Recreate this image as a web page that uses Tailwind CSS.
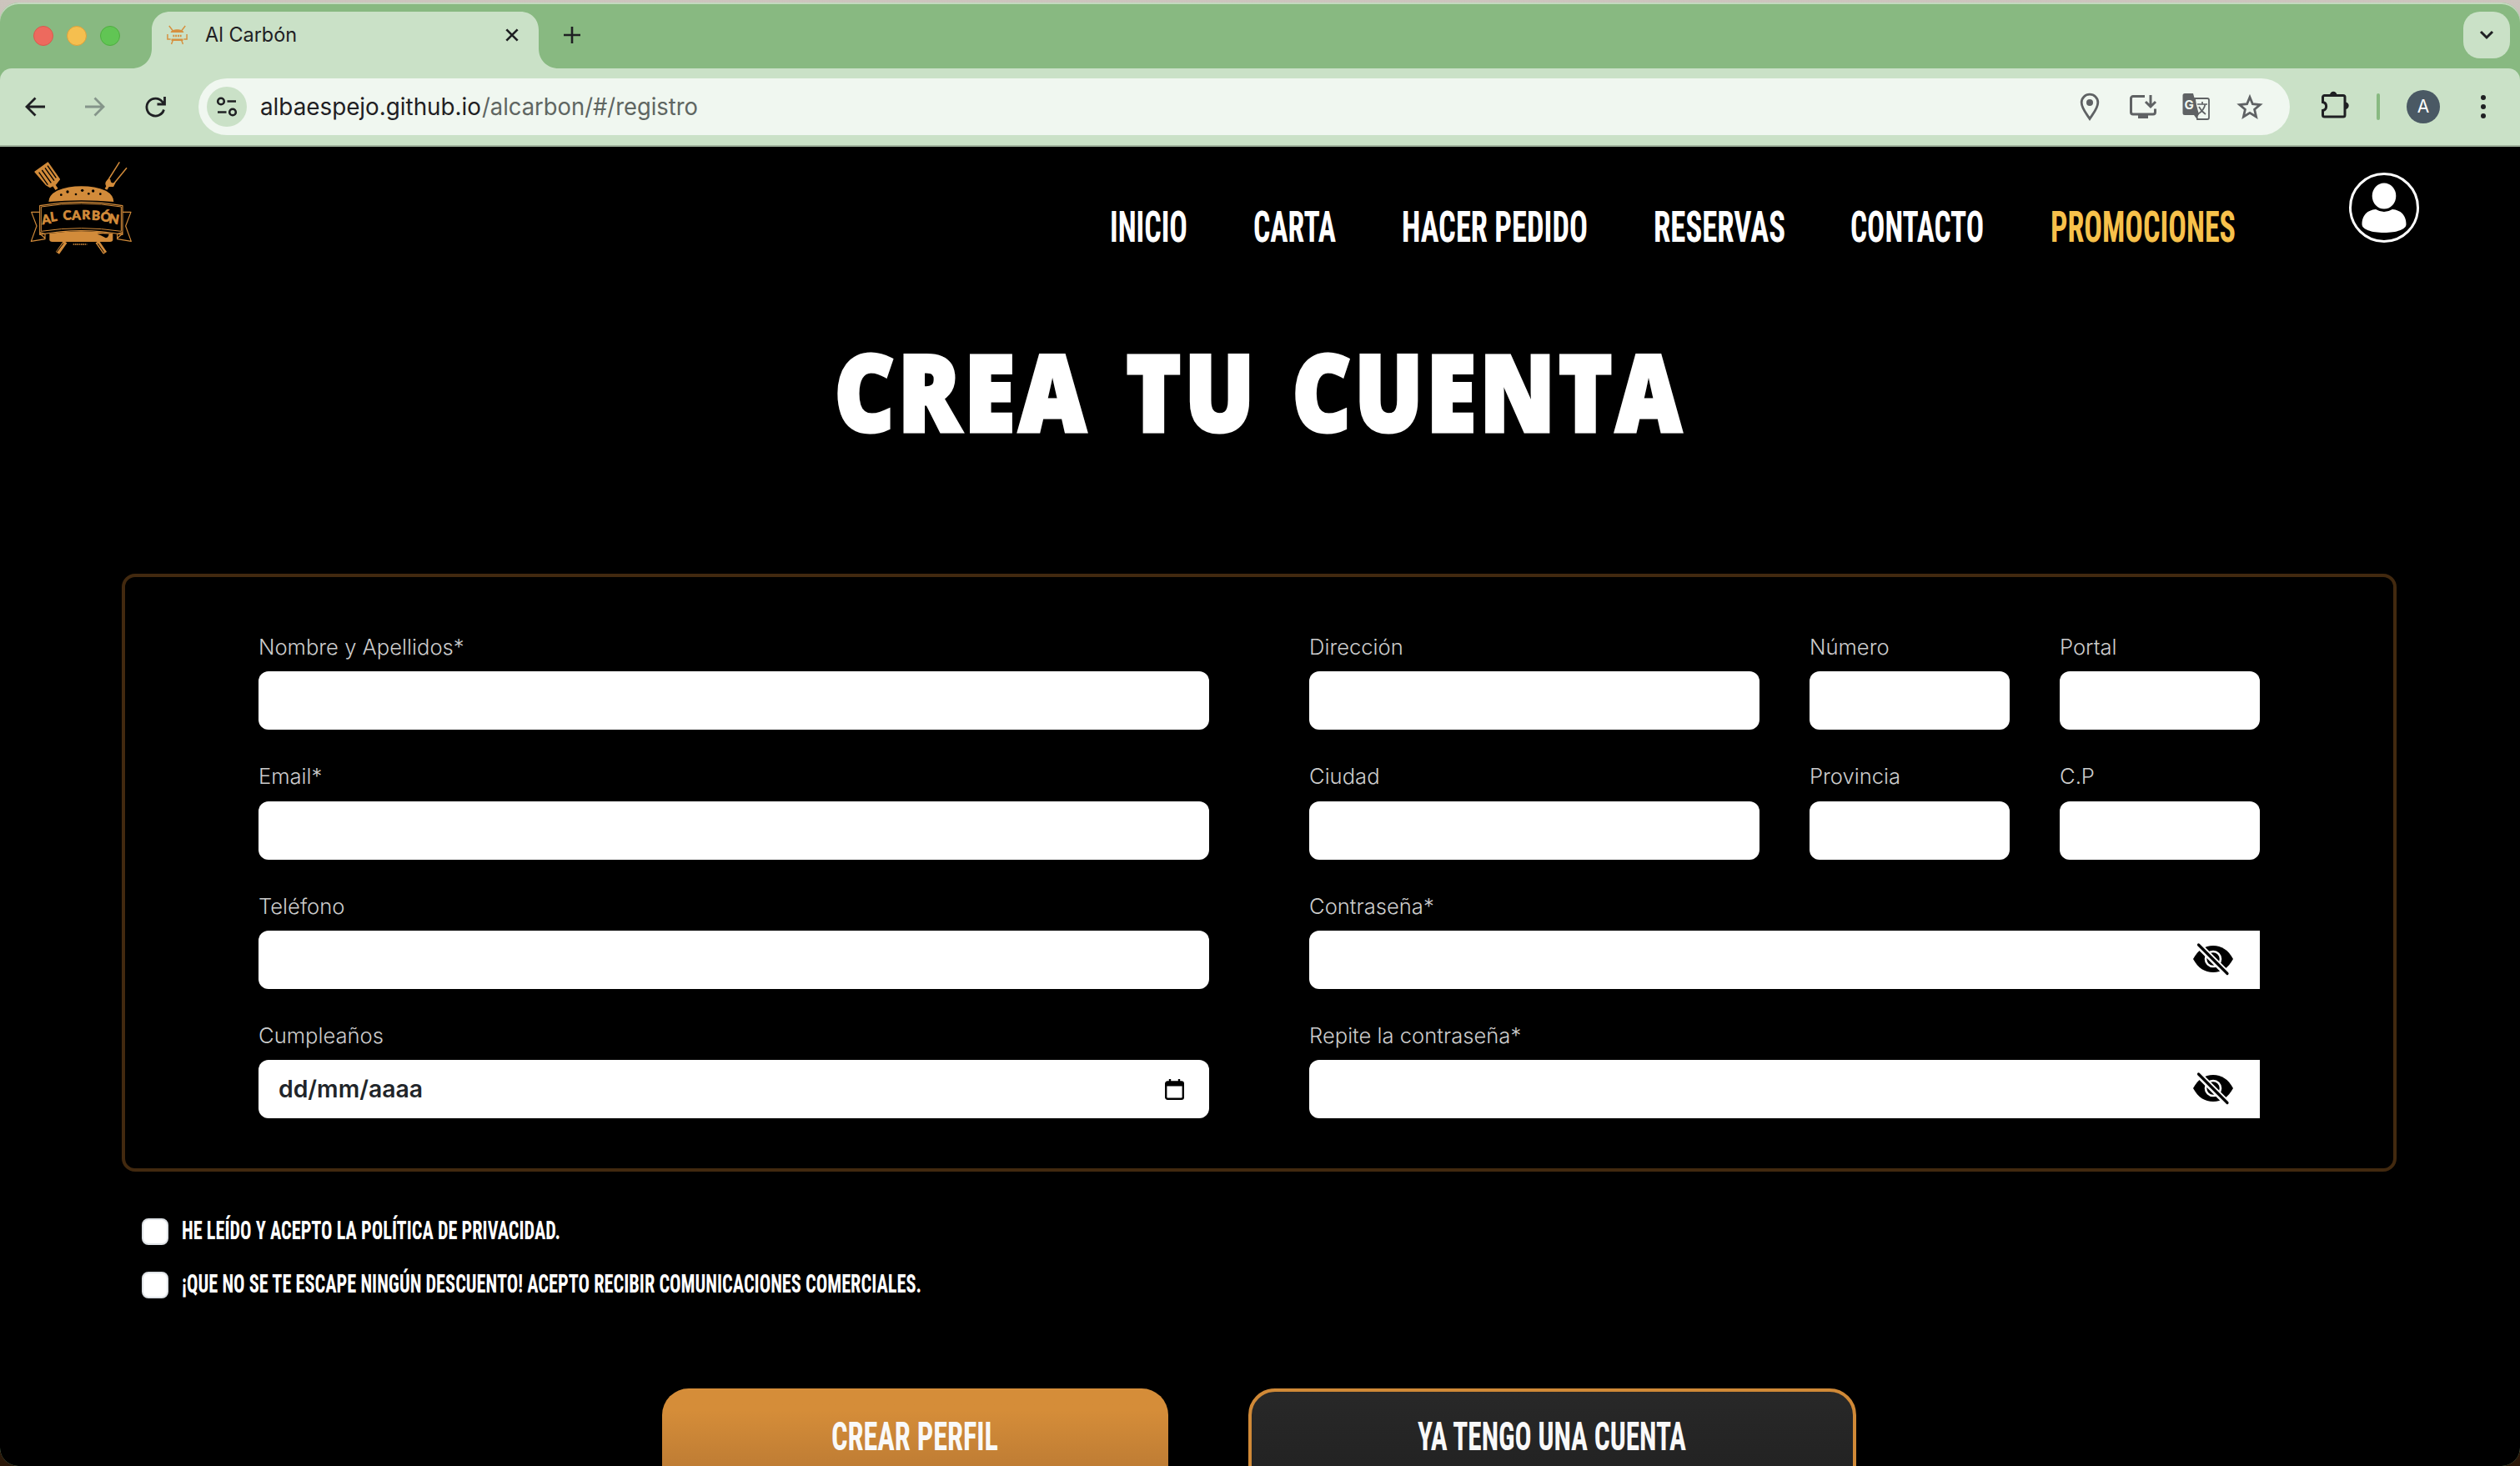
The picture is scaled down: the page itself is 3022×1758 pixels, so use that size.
<!DOCTYPE html>
<html lang="es">
<head>
<meta charset="utf-8">
<title>Al Carbón</title>
<script src="https://cdn.jsdelivr.net/npm/@tailwindcss/browser@4"></script>
</head>
<body class="h-[1758px] w-[3022px] overflow-hidden bg-linear-to-b from-[#cdc5be] to-[#2a1708] pt-[3px] font-['Inter',sans-serif] [&_svg]:overflow-visible">
<div class="flex h-[1755px] flex-col overflow-hidden rounded-[22px] bg-[#88b981] shadow-[inset_0_2px_0_#c3d9bf]">

  <!-- Tab strip -->
  <div class="flex h-[79px] shrink-0 items-start pt-[11px]">
    <div class="ml-10 mt-[17px] flex gap-4">
      <span class="size-6 rounded-full border border-[#d9594d] bg-[#ed6a5e]"></span>
      <span class="size-6 rounded-full border border-[#dba13c] bg-[#f5bf4f]"></span>
      <span class="size-6 rounded-full border border-[#4fae40] bg-[#61c554]"></span>
    </div>
    <div class="relative ml-[38px] flex h-[68px] w-[464px] items-start">
      <svg class="absolute -left-6 top-0" width="512" height="68" viewBox="0 0 512 68" fill="#cae1c7"><path d="M0 68c14 0 24-10 24-24V22C24 9 33 0 46 0h420c13 0 22 9 22 22v22c0 14 10 24 24 24z"/></svg>
      <svg class="relative ml-[18px] mt-4" width="25" height="24" viewBox="0 0 27 24" fill="none" stroke="#d6903f" stroke-width="1.600" preserveAspectRatio="none"><path d="M3 1l5 6M24 1l-5 6M8 18l-2 5M19 18l2 5M1 11v6h4M26 11v6h-4" /><path d="M5 9c1-5 16-5 17 0zM6 16.500h15v2.500h-15z" fill="#d6903f" stroke="none"/><path d="M8 13h11" stroke-width="2.400" stroke-dasharray="2 1"/></svg>
      <svg class="relative ml-[21px] mt-3" width="112" height="34" fill="#1f2023"><text x="0" y="24" font-size="24" textLength="110" lengthAdjust="spacingAndGlyphs">Al Carbón</text></svg>
      <svg class="relative ml-[248px] mt-5" width="16" height="16" viewBox="0 0 18 18" stroke="#1f2023" stroke-width="3"><path d="M1.500 1.500l15 15M16.500 1.500l-15 15"/></svg>
    </div>
    <svg class="ml-[30px] mt-[18px]" width="20" height="20" viewBox="0 0 20 20" stroke="#1f2023" stroke-width="2.600"><path d="M10 0v20M0 10h20"/></svg>
    <div class="ml-auto mr-3 flex size-14 items-center justify-center rounded-[20px] bg-[#cae1c7]">
      <svg width="18" height="12" viewBox="0 0 18 12" fill="none" stroke="#1f2023" stroke-width="3"><path d="M2 2l7 7 7-7"/></svg>
    </div>
  </div>

  <!-- Toolbar -->
  <div class="flex h-[94px] shrink-0 items-center rounded-t-[14px] border-b-2 border-[#9fb29c] bg-[#cae1c7]">
    <svg class="ml-[30px]" width="24" height="24" viewBox="0 0 24 24" fill="none" stroke="#1f2023" stroke-width="2.800"><path d="M24 12H2M12.500 1.500L2 12l10.500 10.500"/></svg>
    <svg class="ml-12" width="24" height="24" viewBox="0 0 24 24" fill="none" stroke="#85958a" stroke-width="2.800"><path d="M0 12h22M11.500 1.500L22 12 11.500 22.500"/></svg>
    <svg class="ml-12" width="25" height="25" viewBox="0 0 25 25" fill="none" stroke="#1f2023" stroke-width="2.800"><path d="M22.500 15.500A10.500 10.500 0 1 1 20.800 6.200L23 8.500M23.500 0v9h-9"/></svg>
    <div class="ml-[39px] flex h-[68px] w-[2508px] items-center rounded-full bg-[#f0f7f0]">
      <div class="ml-[10px] flex size-12 items-center justify-center rounded-full bg-[#cae1c7]">
        <svg width="26" height="24" viewBox="0 0 26 24" fill="none" stroke="#1f2023" stroke-width="2.600"><circle cx="6" cy="5.500" r="3.800"/><path d="M13.500 5.500H24M2 18.500h10.500"/><circle cx="20" cy="18.500" r="3.800"/></svg>
      </div>
      <svg class="ml-4" width="540" height="48"><text y="34" font-size="28" fill="#1f2023" textLength="265" lengthAdjust="spacingAndGlyphs">albaespejo.github.io</text><text x="266" y="34" font-size="28" fill="#5f6662" textLength="259" lengthAdjust="spacingAndGlyphs">/alcarbon/#/registro</text></svg>
      <div class="ml-auto mr-8 flex items-center">
        <svg class="mr-[34px]" width="28" height="34" viewBox="0 0 28 34" fill="none" stroke="#5f6264" stroke-width="2.800"><path d="M14 31.500C9 24 4.200 18.500 4.200 12a9.800 9.800 0 0 1 19.600 0c0 6.500-4.800 12-9.800 19.500z"/><circle cx="14" cy="12" r="4" fill="#5f6264" stroke="none"/></svg>
        <svg class="mr-[31px]" width="32" height="30" viewBox="0 0 32 30" fill="none" stroke="#5f6264" stroke-width="3"><path d="M18 2.500H4a2.500 2.500 0 0 0-2.500 2.500v16.500a2.500 2.500 0 0 0 2.500 2.500h24a2.500 2.500 0 0 0 2.500-2.500V17.500M25 1v13M19 9l6 6 6-6"/><path d="M10 24.500h12v4.500H10z" fill="#5f6264" stroke="none"/></svg>
        <svg class="mr-[31px]" width="34" height="34" viewBox="0 0 34 34"><path d="M15 7h15a2 2 0 0 1 2 2v21a2 2 0 0 1-2 2H18z" fill="none" stroke="#5f6264" stroke-width="1.800"/><path d="M3 1h10l7 25-3 5-3-4H3a2.500 2.500 0 0 1-2.500-2.500v-21A2.500 2.500 0 0 1 3 1z" fill="#5f6264"/><text x="2.500" y="20" font-size="15" font-weight="700" fill="#f0f7f0">G</text><path d="M18 14h12M24 11v3M27.500 14c-1 5-4 9-9 12M20 17c2 4 5 7 8 9" stroke="#5f6264" stroke-width="1.700" fill="none"/></svg>
        <svg width="32" height="30" viewBox="0 0 32 30" fill="none" stroke="#5f6264" stroke-width="2.800"><path d="M16 3.500l3.400 8.200 8.900.8-6.700 5.800 2 8.700L16 22.400 8.400 27l2-8.700-6.700-5.800 8.900-.8z"/></svg>
      </div>
    </div>
    <svg class="ml-[38px] -mt-1" width="33" height="34" viewBox="0 0 33 34" fill="none" stroke="#1f2023" stroke-width="3"><path d="M3.500 5.500H26a2 2 0 0 1 2 2V29a2 2 0 0 1-2 2H3.500a2 2 0 0 1-2-2v-5.500c5.500-1 5.500-9 0-10V7.500a2 2 0 0 1 2-2z"/><path d="M10 5a4.200 4.200 0 0 1 8.400 0zM28.500 13.500a4.200 4.200 0 0 1 0 8.400z" fill="#1f2023" stroke="none"/></svg>
    <span class="ml-[33px] h-8 w-1 rounded-full bg-[#88b981]"></span>
    <span class="ml-8 flex size-10 items-center justify-center rounded-full bg-[#4a5964] text-[21px] text-white">A</span>
    <svg class="ml-[49px]" width="6" height="30" viewBox="0 0 6 30" fill="#1f2023"><circle cx="3" cy="4" r="3"/><circle cx="3" cy="15" r="3"/><circle cx="3" cy="26" r="3"/></svg>
  </div>

  <!-- Page -->
  <main class="flex min-h-0 flex-1 flex-col overflow-hidden bg-black text-white">
    <header class="flex h-[160px] shrink-0 items-start">
      <svg class="ml-5 mt-1" width="160" height="140" viewBox="0 0 480 420" fill="none" stroke="#d28b3a" stroke-width="4" stroke-linejoin="round">
        <path d="M66 78l46-33 42 60-14 18-20 10-14-8z" fill="#d28b3a"/>
        <path d="M80 80l32 45M91 72l33 46M102 64l33 46M111 56l31 44" stroke="#000" stroke-width="4"/>
        <path d="M134 126l10 15" stroke-width="11"/>
        <path d="M370 43l-41 65q-10 17 6 18 10 2 20-12l41-50" stroke-width="4.500"/>
        <path d="M328 108q-12 12-3 22l22 0 6-12q-16 8-18-12z" fill="#d28b3a"/>
        <path d="M330 126l-9 15" stroke-width="10"/>
        <path d="M115 186q0-24 30-40 40-16 88-16t88 16q28 16 28 40-116-10-234 0z" fill="#d28b3a" stroke="none"/>
        <g fill="#000" stroke="none"><circle cx="160" cy="161" r="4"/><circle cx="183" cy="150" r="5"/><circle cx="213" cy="159" r="4"/><circle cx="236" cy="145" r="5"/><circle cx="259" cy="157" r="4"/><circle cx="275" cy="147" r="5"/><circle cx="301" cy="158" r="4"/></g>
        <path d="M83 200q150-26 298 0v104q-148-28-298 0z" stroke-width="3.500"/>
        <path d="M88 204q145-24 288 0v88q-143-22-288 0z" stroke-width="3"/>
        <path d="M83 223H53l19 50-20 55 50-8V302l-19-6M381 223h30l-19 50 20 55-50-8v-18l19-6M83 300l20 18M381 300l-20 18" stroke-width="3.500"/>
        <path d="M118 300q114-16 228 0v22q0 8-10 8H128q-10 0-10-8z" fill="#d28b3a" stroke="none"/>
        <path d="M290 302q20-3 42 0-2 12-12 14-16-10-30-14z" fill="#000" stroke="none"/>
        <path d="M175 330l-28 40M290 330l28 40" stroke-width="15"/>
        <path d="M168 335l-24 32M292 336l22 32" stroke="#000" stroke-width="3"/>
        <path d="M203 339h50" stroke-dasharray="5 2"/>
        <text class="font-['Lato']" font-size="46" font-weight="900" fill="#d28b3a" stroke-width="2" x="92 123 150 168 199 235 269 301 330" y="268 257 250 252 251 250 251 255 261" rotate="-8 -8 0 -5 -2 0 2 5 10">AL CARBÓN</text>
      </svg>
      <nav class="ml-[1150px] flex pt-[50px] font-['Roboto_Condensed'] text-[52.500px] font-bold">
        <svg width="173" height="90" fill="#fff"><text y="64" x="1" textLength="93" lengthAdjust="spacingAndGlyphs">INICIO</text></svg>
        <svg width="178" height="90" fill="#fff"><text y="64" textLength="99" lengthAdjust="spacingAndGlyphs">CARTA</text></svg>
        <svg width="302" height="90" fill="#fff"><text y="64" textLength="223" lengthAdjust="spacingAndGlyphs">HACER PEDIDO</text></svg>
        <svg width="236" height="90" fill="#fff"><text y="64" textLength="158" lengthAdjust="spacingAndGlyphs">RESERVAS</text></svg>
        <svg width="240" height="90" fill="#fff"><text y="64" textLength="160" lengthAdjust="spacingAndGlyphs">CONTACTO</text></svg>
        <svg width="224" height="90" fill="#f7c14b"><text y="64" textLength="222" lengthAdjust="spacingAndGlyphs">PROMOCIONES</text></svg>
      </nav>
      <svg class="ml-[133px] mt-[30px]" width="86" height="86" viewBox="0 0 86 86" fill="#fff"><circle cx="43" cy="43" r="40.500" fill="none" stroke="#fff" stroke-width="3"/><ellipse cx="43" cy="29" rx="14.300" ry="15.500"/><path d="M33 45q10 6 20 0c11 1 16.500 8 16.500 18 0 6-11 10-26.500 10S16.500 69 16.500 63c0-10 5.500-17 16.500-18z"/></svg>
    </header>

    <h1 class="flex h-[352px] shrink-0 justify-center pt-[64px]">
      <svg width="1060" height="150" class="font-['Open_Sans'] text-[126px] font-extrabold tracking-[6px]" fill="#fff" stroke="#fff" stroke-width="5" stroke-linejoin="miter" stroke-miterlimit="3"><g style="font-stretch:90%"><text x="20" y="117" textLength="306" lengthAdjust="spacingAndGlyphs">CREA</text><text x="370" y="117" textLength="158" lengthAdjust="spacingAndGlyphs">TU</text><text x="569" y="117" textLength="471" lengthAdjust="spacingAndGlyphs">CUENTA</text></g></svg>
    </h1>

    <form class="flex flex-col">
      <div class="ml-[146px] flex h-[717px] w-[2728px] gap-[120px] rounded-[16px] border-4 border-[#42290f] pl-[160px] pt-[65px] text-[25.600px] font-[360] leading-[38.400px] text-[#cccccc]">
        <div class="flex w-[1140px] flex-col gap-[36.900px]">
          <label class="flex flex-col gap-[10px]">Nombre y Apellidos*<span class="h-[70px] rounded-[12px] bg-white"></span></label>
          <label class="flex flex-col gap-[10px]">Email*<span class="h-[70px] rounded-[12px] bg-white"></span></label>
          <label class="flex flex-col gap-[10px]">Teléfono<span class="h-[70px] rounded-[12px] bg-white"></span></label>
          <label class="flex flex-col gap-[10px]">Cumpleaños<span class="flex h-[70px] items-center justify-between rounded-[12px] bg-white pl-6 pr-[30px]"><svg width="180" height="50"><text y="35" font-size="28" font-weight="600" fill="#212529" textLength="173" lengthAdjust="spacingAndGlyphs">dd/mm/aaaa</text></svg><svg width="23" height="25" viewBox="0 0 23 25" fill="none" stroke="#000" stroke-width="2.400"><rect x="1.200" y="3.500" width="20.600" height="20.300" rx="2"/><path d="M1 6h21" stroke-width="5"/><path d="M6 0v4M17 0v4"/></svg></span></label>
        </div>
        <div class="flex w-[1140px] flex-col gap-[36.900px]">
          <div class="flex gap-[60px]">
            <label class="flex w-[540px] flex-col gap-[10px]">Dirección<span class="h-[70px] rounded-[12px] bg-white"></span></label>
            <label class="flex w-[240px] flex-col gap-[10px]">Número<span class="h-[70px] rounded-[12px] bg-white"></span></label>
            <label class="flex w-[240px] flex-col gap-[10px]">Portal<span class="h-[70px] rounded-[12px] bg-white"></span></label>
          </div>
          <div class="flex gap-[60px]">
            <label class="flex w-[540px] flex-col gap-[10px]">Ciudad<span class="h-[70px] rounded-[12px] bg-white"></span></label>
            <label class="flex w-[240px] flex-col gap-[10px]">Provincia<span class="h-[70px] rounded-[12px] bg-white"></span></label>
            <label class="flex w-[240px] flex-col gap-[10px]">C.P<span class="h-[70px] rounded-[12px] bg-white"></span></label>
          </div>
          <label class="flex flex-col gap-[10px]">Contraseña*<span class="flex h-[70px] items-center justify-end rounded-l-[12px] bg-white pr-8"><svg class="-mt-0.5" width="48" height="40" viewBox="0 0 48 40"><path d="M0 20C6 9 14 4 24 4s18 5 24 16c-6 11-14 16-24 16S6 31 0 20z"/><circle cx="24" cy="20" r="9" fill="none" stroke="#fff" stroke-width="2.600"/><path d="M5 2l36 36" stroke="#fff" stroke-width="8"/><path d="M6.500 3L41 37.500" stroke="#000" stroke-width="3.200" stroke-linecap="round"/></svg></span></label>
          <label class="flex flex-col gap-[10px]">Repite la contraseña*<span class="flex h-[70px] items-center justify-end rounded-l-[12px] bg-white pr-8"><svg class="-mt-0.5" width="48" height="40" viewBox="0 0 48 40"><path d="M0 20C6 9 14 4 24 4s18 5 24 16c-6 11-14 16-24 16S6 31 0 20z"/><circle cx="24" cy="20" r="9" fill="none" stroke="#fff" stroke-width="2.600"/><path d="M5 2l36 36" stroke="#fff" stroke-width="8"/><path d="M6.500 3L41 37.500" stroke="#000" stroke-width="3.200" stroke-linecap="round"/></svg></span></label>
        </div>
      </div>

      <div class="ml-[170px] mt-14 flex flex-col gap-8 font-['Roboto_Condensed'] text-[31.500px] font-bold">
        <label class="flex h-8 items-center gap-4"><span class="size-8 rounded-[8px] border-2 border-[#dee2e6] bg-white"></span><svg width="900" height="40" fill="#fff"><text y="29" textLength="454" lengthAdjust="spacingAndGlyphs">HE LEÍDO Y ACEPTO LA POLÍTICA DE PRIVACIDAD.</text></svg></label>
        <label class="flex h-8 items-center gap-4"><span class="size-8 rounded-[8px] border-2 border-[#dee2e6] bg-white"></span><svg width="900" height="40" fill="#fff"><text y="29" textLength="887" lengthAdjust="spacingAndGlyphs">¡QUE NO SE TE ESCAPE NINGÚN DESCUENTO! ACEPTO RECIBIR COMUNICACIONES COMERCIALES.</text></svg></label>
      </div>

      <div class="ml-[794px] mt-[108px] flex gap-24 font-['Roboto_Condensed'] text-[48px] font-bold">
        <div class="flex h-[130px] w-[607px] justify-center rounded-[32px] bg-linear-to-b from-[#d58d39] from-20% to-[#b37431] pt-[30px]"><svg width="202" height="60" fill="#f9f9f9"><text y="44" textLength="200" lengthAdjust="spacingAndGlyphs">CREAR PERFIL</text></svg></div>
        <div class="flex h-[130px] w-[729px] justify-center rounded-[32px] border-4 border-[#d08937] bg-linear-to-b from-[#282828] to-[#212121] pt-[26px]"><svg width="324" height="60" fill="#f9f9f9"><text y="44" textLength="322" lengthAdjust="spacingAndGlyphs">YA TENGO UNA CUENTA</text></svg></div>
      </div>
    </form>
  </main>
</div>
</body>
</html>
